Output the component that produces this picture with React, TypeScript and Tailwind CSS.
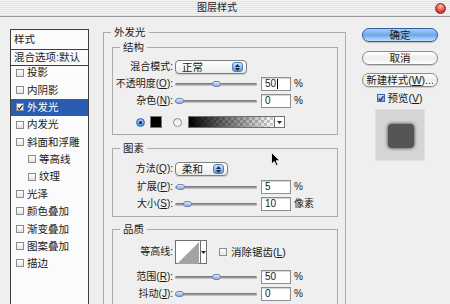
import React from "react";

function Check({ className = "" }: { className?: string }) {
  return (
    <svg width="7" height="7" viewBox="0 0 7 7" className={className}>
      <path d="M0.8 3.6 L2.8 5.6 L6.4 0.8" fill="none" stroke="#1d2f5a" strokeWidth="1.4" />
    </svg>
  );
}

function ListBox({ checked, className = "" }: { checked?: boolean; className?: string }) {
  return (
    <span
      className={`w-[8px] h-[8px] shrink-0 border border-[#8c8c8c] bg-linear-to-b from-white to-[#e4e4e4] flex items-center justify-center ${className}`}
    >
      {checked && <Check />}
    </span>
  );
}

function ListItem({ text, sel, indent }: { text: string; sel?: boolean; indent?: boolean }) {
  return (
    <div
      className={`h-[17.35px] flex items-center ${indent ? "pl-[17px]" : "pl-[5px]"} ${
        sel ? "bg-[#2a5db0] text-white" : ""
      }`}
    >
      <ListBox checked={sel} />
      <span className="ml-[3px] text-[10.5px]">{text}</span>
    </div>
  );
}

function StyleList() {
  const items: { t: string; sel?: boolean; indent?: boolean }[] = [
    { t: "投影" },
    { t: "内阴影" },
    { t: "外发光", sel: true },
    { t: "内发光" },
    { t: "斜面和浮雕" },
    { t: "等高线", indent: true },
    { t: "纹理", indent: true },
    { t: "光泽" },
    { t: "颜色叠加" },
    { t: "渐变叠加" },
    { t: "图案叠加" },
    { t: "描边" },
  ];
  return (
    <div className="ml-[10px] mt-[12px] w-[79px] h-[290px] shrink-0 border border-[#3e3e3e] bg-[#fbfbfb]">
      <div className="h-[20px] border-b border-[#3e3e3e] flex items-center pl-[3px] text-[10.5px]">样式</div>
      <div className="h-[16px] border-b border-[#3e3e3e] flex items-center pl-[3px] text-[10.5px]">混合选项:默认</div>
      <div className="-mt-[2px]">
        {items.map((it) => (
          <ListItem key={it.t} text={it.t} sel={it.sel} indent={it.indent} />
        ))}
      </div>
    </div>
  );
}

function Group({ label, className = "", children }: { label: string; className?: string; children: React.ReactNode }) {
  return (
    <div className={`relative border border-[#ababab] ${className}`}>
      <span className="absolute left-[7px] -top-[7px] px-[3px] leading-[12px] bg-[#efefef] text-[10.5px]">{label}</span>
      {children}
    </div>
  );
}

function Label({ children }: { children: React.ReactNode }) {
  return <div className="w-[60px] shrink-0 text-right whitespace-nowrap">{children}</div>;
}

function Slider({ pos }: { pos: number }) {
  return (
    <div className="relative w-[82px] h-[14px] flex items-center">
      <div className="w-full h-[3px] rounded-full bg-linear-to-b from-[#6c6c6c] to-[#d0d0d0]" />
      <div
        className="absolute top-[4px] w-[9px] h-[6px] rounded-full border border-[#6a86b8] bg-linear-to-b from-[#e2eaf7] to-[#8ea8d6]"
        style={{ left: pos }}
      />
    </div>
  );
}

function Num({ v, caret }: { v: string; caret?: boolean }) {
  return (
    <div className="w-[30px] h-[14px] border border-[#8e8e8e] bg-white shadow-[inset_0_1px_1px_rgba(0,0,0,0.18)] flex items-center pl-[3px] text-[10px]">
      {v}
      {caret && <span className="w-px h-[10px] bg-black ml-px" />}
    </div>
  );
}

function Arrows() {
  return (
    <div className="w-[11px] h-[10px] mr-[3px] rounded-[3px] border border-[#4b7fc4] bg-linear-to-b from-[#cfe4fc] to-[#5b97e2] flex flex-col items-center justify-center gap-[1px]">
      <svg width="5" height="3" viewBox="0 0 5 3">
        <path d="M0 3 L2.5 0 L5 3 Z" fill="#1e2a44" />
      </svg>
      <svg width="5" height="3" viewBox="0 0 5 3">
        <path d="M0 0 L2.5 3 L5 0 Z" fill="#1e2a44" />
      </svg>
    </div>
  );
}

function Select({ text, className }: { text: string; className: string }) {
  return (
    <div
      className={`ml-[2px] h-[14px] rounded-[4px] border border-[#7e7e7e] bg-linear-to-b from-white to-[#ececec] shadow-[0_1px_1px_rgba(0,0,0,0.15)] flex items-center ${className}`}
    >
      <span className="pl-[6px] flex-1 text-[10.5px]">{text}</span>
      <Arrows />
    </div>
  );
}

function SliderRow({
  label,
  pos,
  v,
  unit,
  caret,
  className = "",
}: {
  label: React.ReactNode;
  pos: number;
  v: string;
  unit: string;
  caret?: boolean;
  className?: string;
}) {
  return (
    <div className={`h-[14px] flex items-center ${className}`}>
      <Label>{label}</Label>
      <div className="ml-[2px]">
        <Slider pos={pos} />
      </div>
      <div className="ml-[4px]">
        <Num v={v} caret={caret} />
      </div>
      <span className="ml-[3px]">{unit}</span>
    </div>
  );
}

function Radio({ on, className = "" }: { on?: boolean; className?: string }) {
  return on ? (
    <span
      className={`w-[9px] h-[9px] rounded-full border border-[#3a68b0] bg-[radial-gradient(circle_at_50%_35%,#cfe3fb,#4d8ee0_70%)] flex items-center justify-center ${className}`}
    >
      <span className="w-[3px] h-[3px] rounded-full bg-[#10203c]" />
    </span>
  ) : (
    <span className={`w-[9px] h-[9px] rounded-full border border-[#8a8a8a] bg-linear-to-b from-[#e8e8e8] to-white ${className}`} />
  );
}

function DropTri() {
  return (
    <svg width="5" height="3" viewBox="0 0 5 3">
      <path d="M0 0 L2.5 3 L5 0 Z" fill="#222" />
    </svg>
  );
}

function Middle() {
  return (
    <div className="ml-[14px] mt-[15px] w-[243px] h-[300px] shrink-0 relative border border-b-0 border-[#ababab]">
      <span className="absolute left-[7px] -top-[7px] px-[3px] leading-[12px] bg-[#efefef] text-[10.5px]">外发光</span>

      <Group label="结构" className="ml-[8px] mr-[7px] mt-[14px] pt-[12px] pb-[5px]">
        <div className="h-[14px] flex items-center">
          <Label>混合模式:</Label>
          <Select text="正常" className="w-[72px]" />
        </div>
        <SliderRow
          className="mt-[3px]"
          label={
            <>
              不透明度(<u>O</u>):
            </>
          }
          pos={37}
          v="50"
          unit="%"
          caret
        />
        <SliderRow
          className="mt-[3px]"
          label={
            <>
              杂色(<u>N</u>):
            </>
          }
          pos={0}
          v="0"
          unit="%"
        />
        <div className="h-[14px] mt-[7px] flex items-center pl-[23px]">
          <Radio on />
          <span className="ml-[5px] w-[12px] h-[12px] bg-black border border-[#7a7a7a]" />
          <Radio className="ml-[11px]" />
          <div className="ml-[6px] h-[12px] flex border border-[#6f6f6f]">
            <div className="w-[85px] h-full [background:linear-gradient(to_right,#000,rgba(0,0,0,0)),repeating-conic-gradient(#cdcdcd_0%_25%,#ffffff_0%_50%)_0_0/6px_6px]" />
            <div className="w-[10px] h-full bg-white border-l border-[#6f6f6f] flex items-center justify-center">
              <DropTri />
            </div>
          </div>
        </div>
      </Group>

      <Group label="图素" className="ml-[8px] mr-[7px] mt-[13px] pt-[13px] pb-[5px]">
        <div className="h-[14px] flex items-center">
          <Label>
            方法(<u>Q</u>):
          </Label>
          <Select text="柔和" className="w-[53px]" />
        </div>
        <SliderRow
          className="mt-[4px]"
          label={
            <>
              扩展(<u>P</u>):
            </>
          }
          pos={1}
          v="5"
          unit="%"
        />
        <SliderRow
          className="mt-[3px]"
          label={
            <>
              大小(<u>S</u>):
            </>
          }
          pos={8}
          v="10"
          unit="像素"
        />
      </Group>

      <Group label="品质" className="ml-[8px] mr-[7px] mt-[12px] pt-[10px] pb-[10px]">
        <div className="h-[24px] flex items-center">
          <Label>等高线:</Label>
          <div className="ml-[2px] w-[32px] h-[24px] flex border border-[#6f6f6f] bg-white">
            <svg width="22" height="22" viewBox="0 0 22 22" className="m-px">
              <path d="M0 22 L22 0 L22 22 Z" fill="#a3a3a3" />
            </svg>
            <div className="flex-1 border-l border-[#6f6f6f] flex items-center justify-center">
              <DropTri />
            </div>
          </div>
          <ListBox className="ml-[12px]" />
          <span className="ml-[4px] text-[10.5px]">
            消除锯齿(<u>L</u>)
          </span>
        </div>
        <SliderRow
          className="mt-[6px]"
          label={
            <>
              范围(<u>R</u>):
            </>
          }
          pos={37}
          v="50"
          unit="%"
        />
        <SliderRow
          className="mt-[3px]"
          label={
            <>
              抖动(<u>J</u>):
            </>
          }
          pos={0}
          v="0"
          unit="%"
        />
      </Group>
    </div>
  );
}

function Btn({ children, primary, className = "" }: { children: React.ReactNode; primary?: boolean; className?: string }) {
  return (
    <div
      className={`w-[76px] h-[14px] rounded-full flex items-center justify-center text-[10.5px] whitespace-nowrap ${
        primary
          ? "border border-[#2d5da6] bg-linear-to-b from-[#a9cdf6] via-[#6ea6ea] to-[#bfe0ff] shadow-[0_1px_1px_rgba(0,0,0,0.2)]"
          : "border border-[#8a8a8a] bg-linear-to-b from-white via-[#ececec] to-white shadow-[0_1px_1px_rgba(0,0,0,0.15)]"
      } ${className}`}
    >
      {children}
    </div>
  );
}

function RightCol() {
  return (
    <div className="ml-[16px] mt-[11px] w-[76px] shrink-0 flex flex-col items-center">
      <Btn primary>确定</Btn>
      <Btn className="mt-[9px]">取消</Btn>
      <Btn className="mt-[8px]">
        新建样式(<u>W</u>)...
      </Btn>
      <div className="mt-[6px] h-[10px] flex items-center">
        <span className="w-[8px] h-[8px] border border-[#3a68b0] bg-linear-to-b from-[#cfe3fb] to-[#6fa2e6] flex items-center justify-center">
          <Check />
        </span>
        <span className="ml-[2px] text-[10.5px]">
          预览(<u>V</u>)
        </span>
      </div>
      <div className="mt-[6px] w-[50px] h-[52px] bg-[#d5d5d5] border border-[#e2e2e2] flex items-start">
        <div className="ml-[12px] mt-[14px] w-[26px] h-[24px] rounded-[4px] bg-[#555555] shadow-[0_0_3px_1px_rgba(70,70,70,0.7)]" />
      </div>
    </div>
  );
}

function TitleBar() {
  return (
    <div className="h-[17px] flex items-center border-b border-[#9a9a9a] bg-[repeating-linear-gradient(to_bottom,#f4f4f4_0px,#f4f4f4_1px,#e3e3e3_1px,#e3e3e3_2px)]">
      <span className="pl-[197px] text-[10px] text-[#222]">图层样式</span>
      <div className="flex-1" />
      <span className="mr-[4px] w-[11px] h-[11px] rounded-full border border-[#8e2a22] bg-[radial-gradient(circle_at_50%_30%,#ffc4ba,#e4483c_55%,#a11f15)]" />
    </div>
  );
}

function Cursor() {
  return (
    <svg width="10" height="15" viewBox="0 0 10 15" className="absolute left-[271px] top-[152px]">
      <path d="M0.5 0.5 L0.5 12 L3.3 9.4 L5.3 13.8 L7 13 L5.1 8.7 L8.8 8.7 Z" fill="#000" stroke="#fff" strokeWidth="0.8" />
    </svg>
  );
}

export default function App() {
  return (
    <div className="relative w-[450px] h-[304px] overflow-hidden bg-[#efefef] text-[#1a1a1a] font-['Liberation_Sans','Noto_Sans_CJK_SC',sans-serif] text-[10px] leading-none">
      <TitleBar />
      <div className="flex items-start">
        <StyleList />
        <Middle />
        <RightCol />
      </div>
      <Cursor />
    </div>
  );
}
